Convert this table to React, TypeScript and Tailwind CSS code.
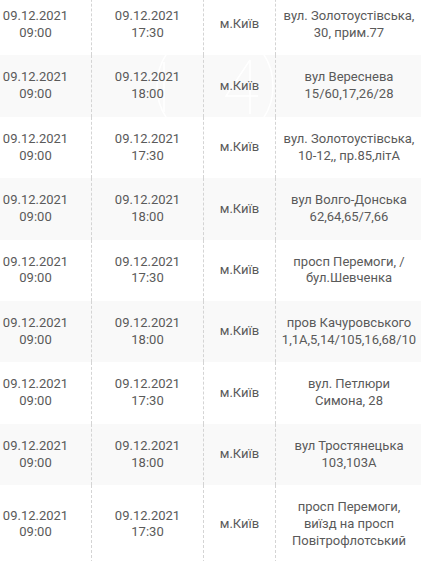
const rows = [
  { end: "17:30", addr: ["вул. Золотоустівська,", "30, прим.77"] },
  { end: "18:00", addr: ["вул Вереснева", "15/60,17,26/28"] },
  { end: "17:30", addr: ["вул. Золотоустівська,", "10-12,, пр.85,літА"] },
  { end: "18:00", addr: ["вул Волго-Донська", "62,64,65/7,66"] },
  { end: "17:30", addr: ["просп Перемоги, /", "бул.Шевченка"] },
  { end: "18:00", addr: ["пров Качуровського", "1,1А,5,14/105,16,68/10"] },
  { end: "17:30", addr: ["вул. Петлюри", "Симона, 28"] },
  { end: "18:00", addr: ["вул Тростянецька", "103,103А"] },
  { end: "17:30", addr: ["просп Перемоги,", "виїзд на просп", "Повітрофлотський"] },
];

function Cell({ lines, border = true }: { lines: string[]; border?: boolean }) {
  return (
    <div
      className={
        "relative z-10 flex flex-col items-center justify-center text-center py-[14px] " +
        (border ? "border-r border-dashed border-[#d4d4d4]" : "")
      }
    >
      {lines.map((l, i) => (
        <span key={i}>{l}</span>
      ))}
    </div>
  );
}

export default function App() {
  return (
    <div className="relative w-[421px] h-[561px] overflow-hidden bg-white">
      <div
        className="-ml-[20px] -mt-[7px] w-[442px] text-[#5a5a5a] text-[13px] leading-[16.7px]"
        style={{ fontFamily: "Roboto, 'Liberation Sans', sans-serif" }}
      >
        <div className="h-[1px] bg-[#f9f9f9]" />
        {rows.map((r, i) => (
          <div
            key={i}
            className={
              "relative grid grid-cols-[112px_112px_72px_146px] " +
              (i % 2 === 1 ? "bg-[#f9f9f9]" : "bg-white")
            }
          >
            <Cell lines={["09.12.2021", "09:00"]} />
            <Cell lines={["09.12.2021", r.end]} />
            <Cell lines={["м.Київ"]} />
            <Cell lines={r.addr} border={false} />
          </div>
        ))}
      </div>
      {/* faint watermark logo */}
      <svg className="absolute left-[150px] top-[54px] pointer-events-none" width="130" height="64" viewBox="0 0 130 64">
        <g fill="none" stroke="#ffffff" strokeWidth="1.5">
          <circle cx="65" cy="32" r="58" />
          <path d="M14 8 V58" />
          <path d="M100 6 L76 42 H108 M100 6 V60" />
        </g>
      </svg>
    </div>
  );
}
